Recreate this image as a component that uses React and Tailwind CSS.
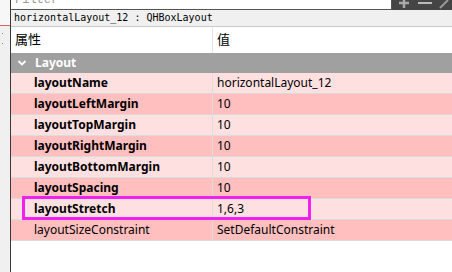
import React from "react";

const rows = [
  ["layoutName", "horizontalLayout_12", true, false],
  ["layoutLeftMargin", "10", true, true],
  ["layoutTopMargin", "10", true, false],
  ["layoutRightMargin", "10", true, true],
  ["layoutBottomMargin", "10", true, false],
  ["layoutSpacing", "10", true, true],
  ["layoutStretch", "1,6,3", true, false],
  ["layoutSizeConstraint", "SetDefaultConstraint", false, true],
];

export default function App() {
  return (
    <div
      className="w-[452px] h-[272px] overflow-hidden bg-white flex"
      style={{ fontFamily: '"Noto Sans","Noto Sans CJK SC",sans-serif' }}
    >
      <div className="w-[10px] shrink-0 bg-[#f0f0f0] flex flex-col">
        <div className="h-[25px] bg-[#f7f7f7]" />
        <div className="h-px bg-[#e06060]" />
        <div className="h-[7px]" />
        <div className="ml-[2px] w-px h-px bg-[#888]" />
        <div className="h-[9px]" />
        <div className="ml-[2px] w-px h-px bg-[#888]" />
      </div>
      <div className="flex-1 flex flex-col border-l border-[#3a3a3a] relative">
        <div className="h-[10px] flex">
          <div className="flex-1 bg-white border-b border-r border-[#555] overflow-hidden relative">
            <span
              className="absolute left-[4px] top-[-9px] text-[12px] text-[#999]"
              style={{ fontFamily: '"Liberation Mono",monospace' }}
            >
              Filter
            </span>
          </div>
          <div className="w-[60px] bg-[#454545] overflow-hidden">
            <svg width="60" height="10" viewBox="0 0 60 10">
              <path d="M7 3 H17 M12 -2 V8" stroke="#aaa" strokeWidth="2.5" />
              <path d="M26 3 H40" stroke="#bbb" strokeWidth="2" />
              <path d="M48 8 L56 0" stroke="#999" strokeWidth="2" />
            </svg>
          </div>
        </div>
        <div className="h-[17px] bg-[#f0f0f0] border-b border-[#c8c8c8] flex items-center pl-[3px]">
          <span
            className="text-[10px] text-black leading-none whitespace-pre"
            style={{ fontFamily: '"DejaVu Sans Mono",monospace' }}
          >
            horizontalLayout_12 : QHBoxLayout
          </span>
        </div>
        <div className="h-[26px] flex bg-white text-[13px] text-black">
          <div className="w-[202px] border-r border-[#e5e5e5] flex items-center pl-[4px]">属性</div>
          <div className="flex-1 flex items-center pl-[4px]">值</div>
        </div>
        <div className="h-[20px] bg-[#a0a0a0] flex items-center">
          <svg width="10" height="10" viewBox="0 0 10 10" className="ml-[6px]">
            <path d="M1.5 3 L5 6.5 L8.5 3" fill="none" stroke="#fff" strokeWidth="1.8" />
          </svg>
          <span className="ml-[8px] text-[12px] font-bold text-white">Layout</span>
        </div>
        {rows.map(([k, v, bold, dark]) => (
          <div
            key={k}
            className={
              "h-[21px] flex border-b border-[#dcdcdc] text-[12px] text-black " +
              (dark ? "bg-[#ffbfbf]" : "bg-[#ffe0e0]")
            }
          >
            <div
              className={
                "w-[202px] border-r border-[#e0dcdc] flex items-center pl-[23px] " +
                (bold ? "font-bold" : "")
              }
            >
              {k}
            </div>
            <div className="flex-1 flex items-center pl-[4px]">{v}</div>
          </div>
        ))}
        <div className="absolute left-[11px] top-[196px] w-[289px] h-[24px] border-[3px] border-[#f020f0]" />
      </div>
    </div>
  );
}
